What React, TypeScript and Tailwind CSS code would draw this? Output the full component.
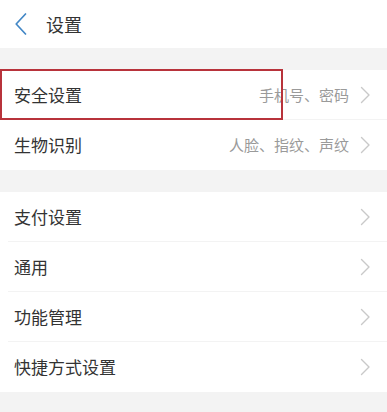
interface SettingItem {
  label: string;
  hint?: string;
  highlighted?: boolean;
}

const groups: SettingItem[][] = [
  [
    { label: '安全设置', hint: '手机号、密码', highlighted: true },
    { label: '生物识别', hint: '人脸、指纹、声纹' },
  ],
  [
    { label: '支付设置' },
    { label: '通用' },
    { label: '功能管理' },
    { label: '快捷方式设置' },
  ],
];

function Arrow() {
  return (
    <svg width="11" height="18" viewBox="0 0 11 18" fill="none" className="shrink-0">
      <path d="M1.5 1.5 L9 9 L1.5 16.5" stroke="#c9c9c9" strokeWidth="1.4" strokeLinecap="round" strokeLinejoin="round" />
    </svg>
  );
}

function BackIcon() {
  return (
    <svg width="12" height="22" viewBox="0 0 12 22" fill="none" className="shrink-0">
      <path d="M10.5 1 L1.2 11 L10.5 21" stroke="#4287c6" strokeWidth="1.7" strokeLinecap="round" strokeLinejoin="round" />
    </svg>
  );
}

function Row({ item, last }: { item: SettingItem; last: boolean }) {
  return (
    <div className="relative flex h-[50px] items-center bg-white pl-[14px] pr-[16px]">
      <span className="text-[17px] text-[#333333]">{item.label}</span>
      <div className="ml-auto flex items-center gap-[11px]">
        {item.hint && <span className="text-[15px] text-[#9a9a9a]">{item.hint}</span>}
        <Arrow />
      </div>
      {!last && <div className="absolute bottom-0 left-[8px] right-0 h-px bg-[#f3f3f3]" />}
      {item.highlighted && (
        <div className="pointer-events-none absolute left-0 top-[-1px] h-[51px] w-[283px] border-2 border-[#b8333b]" />
      )}
    </div>
  );
}

export default function App() {
  return (
    <div
      className="min-h-[412px] w-[387px] bg-[#f3f3f3]"
      style={{ fontFamily: '"Noto Sans CJK SC", "Noto Sans", sans-serif' }}
    >
      <div className="flex h-[48px] items-center bg-white pl-[15px]">
        <BackIcon />
        <span className="ml-[19px] text-[18px] text-[#333333]">设置</span>
      </div>
      <div className="flex flex-col gap-[22px] pt-[22px]">
        {groups.map((group, gi) => (
          <div key={gi} className="flex flex-col">
            {group.map((item, i) => (
              <Row key={item.label} item={item} last={i === group.length - 1} />
            ))}
          </div>
        ))}
      </div>
    </div>
  );
}
